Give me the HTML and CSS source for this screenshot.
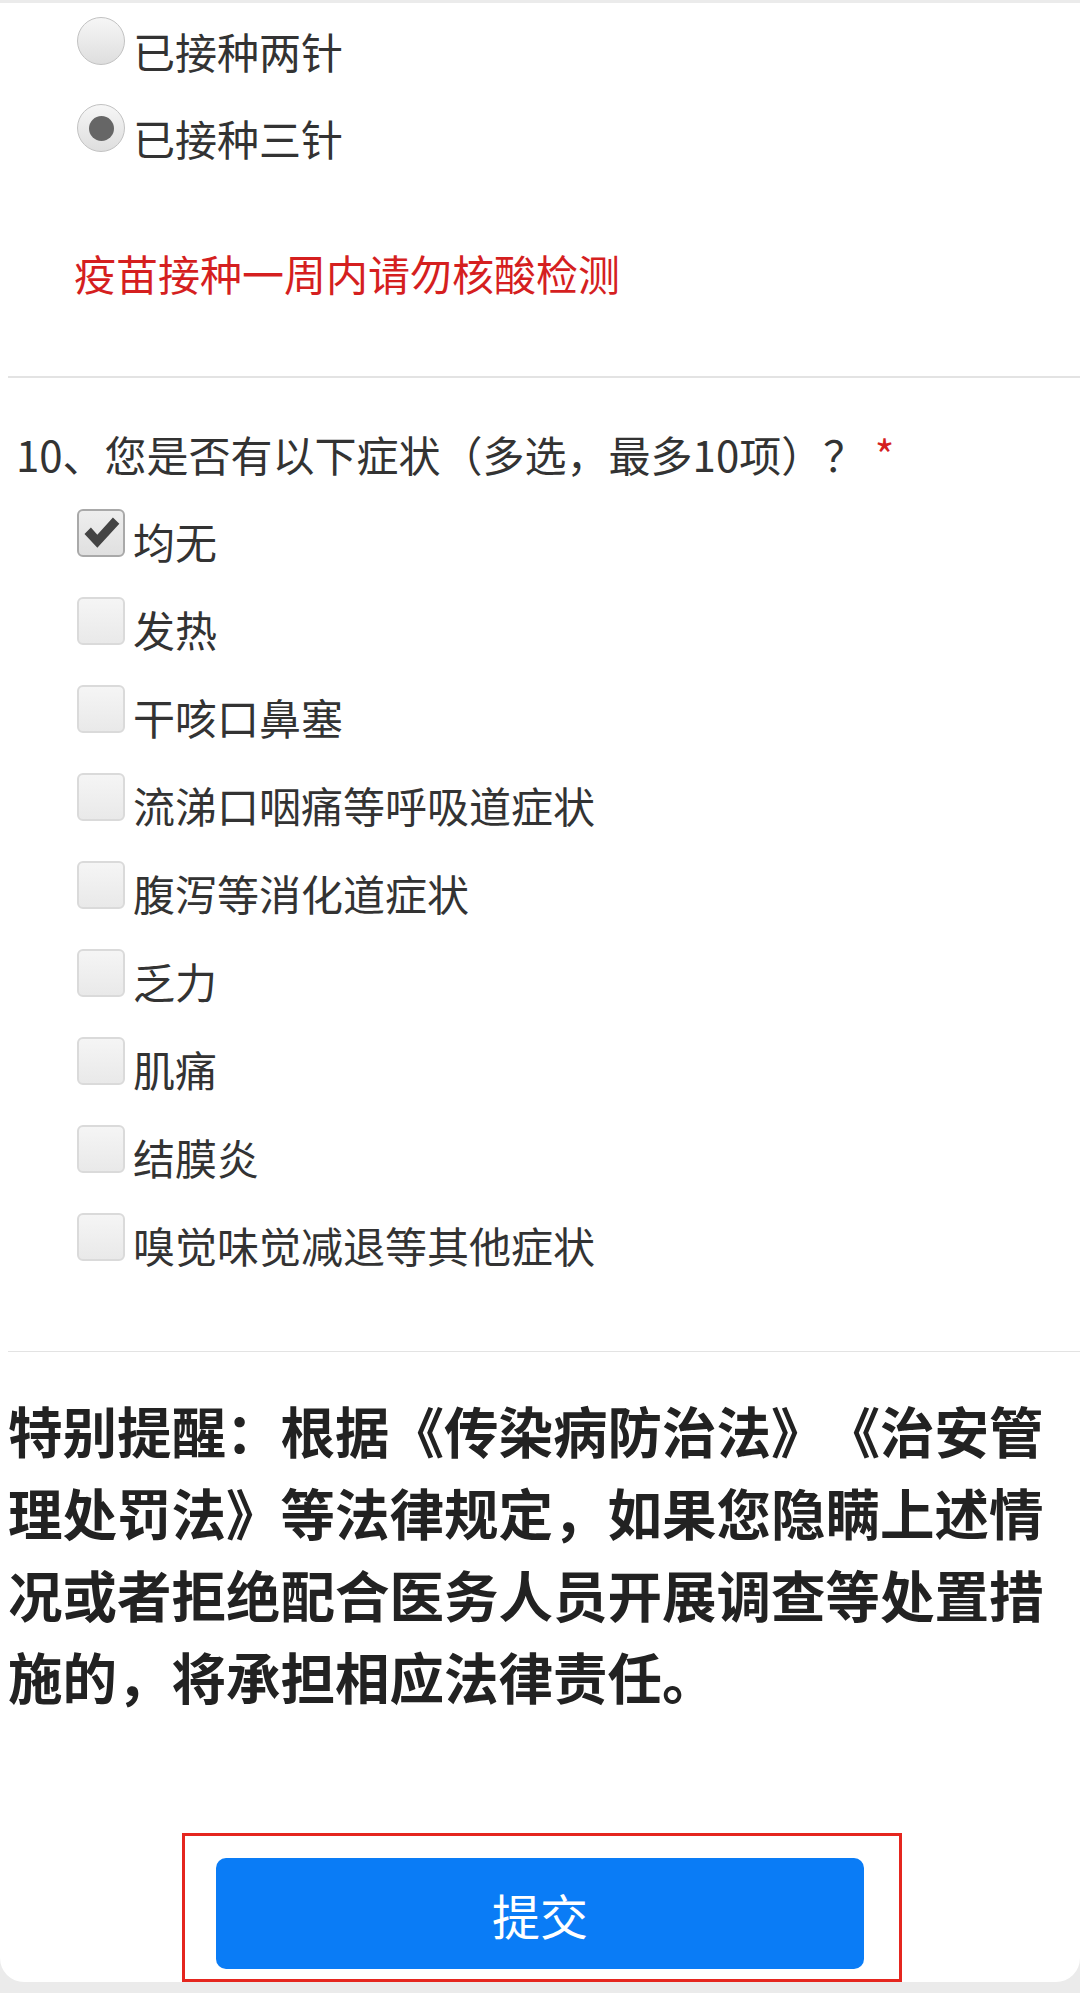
FILE: index.html
```html
<!DOCTYPE html>
<html lang="zh-CN">
<head>
<meta charset="utf-8">
<title>问卷</title>
<link rel="stylesheet" href="styles.css">
</head>
<body>
<div class="card">
  <section class="q q-tail">
    <div class="opts radios">
      <label class="opt">
        <span class="radio"></span>
        <span class="opt-text">已接种两针</span>
      </label>
      <label class="opt">
        <span class="radio checked"><span class="dot"></span></span>
        <span class="opt-text">已接种三针</span>
      </label>
    </div>
    <p class="warn">疫苗接种一周内请勿核酸检测</p>
  </section>
  <hr class="divider">
  <section class="q q10">
    <h2 class="q-title">10、您是否有以下症状（多选，最多10项）？ <span class="req">*</span></h2>
    <div class="opts checks">
      <label class="opt">
        <span class="cbox checked">
          <svg viewBox="0 0 48 48" width="44" height="44"><path d="M6 25 L13 18 L20 26 L37 7 L44 14 L20 40 Z" fill="#444"/></svg>
        </span>
        <span class="opt-text">均无</span>
      </label>
      <label class="opt"><span class="cbox"></span><span class="opt-text">发热</span></label>
      <label class="opt"><span class="cbox"></span><span class="opt-text">干咳口鼻塞</span></label>
      <label class="opt"><span class="cbox"></span><span class="opt-text">流涕口咽痛等呼吸道症状</span></label>
      <label class="opt"><span class="cbox"></span><span class="opt-text">腹泻等消化道症状</span></label>
      <label class="opt"><span class="cbox"></span><span class="opt-text">乏力</span></label>
      <label class="opt"><span class="cbox"></span><span class="opt-text">肌痛</span></label>
      <label class="opt"><span class="cbox"></span><span class="opt-text">结膜炎</span></label>
      <label class="opt"><span class="cbox"></span><span class="opt-text">嗅觉味觉减退等其他症状</span></label>
    </div>
  </section>
  <hr class="divider">
  <p class="notice">特别提醒：根据《传染病防治法》《治安管理处罚法》等法律规定，如果您隐瞒上述情况或者拒绝配合医务人员开展调查等处置措施的，将承担相应法律责任。</p>
  <div class="submit-wrap">
    <button class="submit" type="button">提交</button>
  </div>
</div>
</body>
</html>
```
FILE: styles.css
```css
html, body {
  margin: 0;
  padding: 0;
}
body {
  background: #ebebeb;
  font-family: "Noto Sans CJK SC", "Noto Sans", sans-serif;
  color: #333;
  width: 1080px;
  height: 1993px;
  overflow: hidden;
  text-spacing-trim: space-all;
}
.card {
  margin-top: 3px;
  background: #fff;
  border-radius: 0 0 24px 24px;
  display: flex;
  flex-direction: column;
  padding-top: 14px;
  height: 1979px;
  box-sizing: border-box;
}
.q {
  display: flex;
  flex-direction: column;
}
.opts {
  display: flex;
  flex-direction: column;
  padding-left: 77px;
}
.radios .opt {
  height: 87px;
}
.checks .opt {
  height: 88px;
}
.opt {
  display: flex;
  align-items: flex-start;
}
.opt-text {
  font-size: 42px;
  line-height: 48px;
  margin-left: 8px;
  color: #333;
}
.radios .opt-text {
  padding-top: 10px;
}
.checks .opt-text {
  padding-top: 8px;
}
.radio {
  width: 48px;
  height: 48px;
  box-sizing: border-box;
  border-radius: 50%;
  border: 1px solid #c2c2c2;
  background: linear-gradient(#f6f6f6, #dedede);
  display: flex;
  align-items: center;
  justify-content: center;
  flex: none;
}
.dot {
  width: 25px;
  height: 25px;
  border-radius: 50%;
  background: #666;
}
.cbox {
  width: 48px;
  height: 48px;
  box-sizing: border-box;
  border-radius: 6px;
  border: 2px solid #dadada;
  background: linear-gradient(#f5f5f5, #e9e9e9);
  display: flex;
  align-items: center;
  justify-content: center;
  flex: none;
}
.cbox.checked {
  border-color: #a9a9a9;
  background: linear-gradient(#eeeeee, #e0e0e0);
}
.warn {
  margin: 57px 0 0 74px;
  font-size: 42px;
  line-height: 50px;
  color: #d51f1f;
}
.divider {
  border: 0;
  height: 3px;
  background: #e3e3e3;
  margin: 78px 0 0 8px;
}
.q10 .q-title {
  margin: 52px 0 31px 16px;
  font-size: 42px;
  line-height: 48px;
  font-weight: normal;
  color: #333;
}
.req {
  color: #d51f1f;
}
.q10 + .divider {
  margin-top: 50px;
}
.notice {
  margin: 37px 0 0 0;
  padding: 0 10px 0 8px;
  font-size: 54.5px;
  line-height: 82px;
  font-weight: bold;
  color: #222;
}
.submit-wrap {
  margin: 116px 0 0 182px;
  width: 720px;
  height: 149px;
  box-sizing: border-box;
  border: 3px solid #e5261f;
  padding: 22px 35px 0 31px;
  flex: none;
}
.submit {
  display: block;
  width: 648px;
  height: 111px;
  border: 0;
  border-radius: 10px;
  background: #0a7cf6;
  color: #fff;
  font-family: "Noto Sans CJK SC", "Noto Sans", sans-serif;
  font-size: 48px;
  padding: 0;
}
```
